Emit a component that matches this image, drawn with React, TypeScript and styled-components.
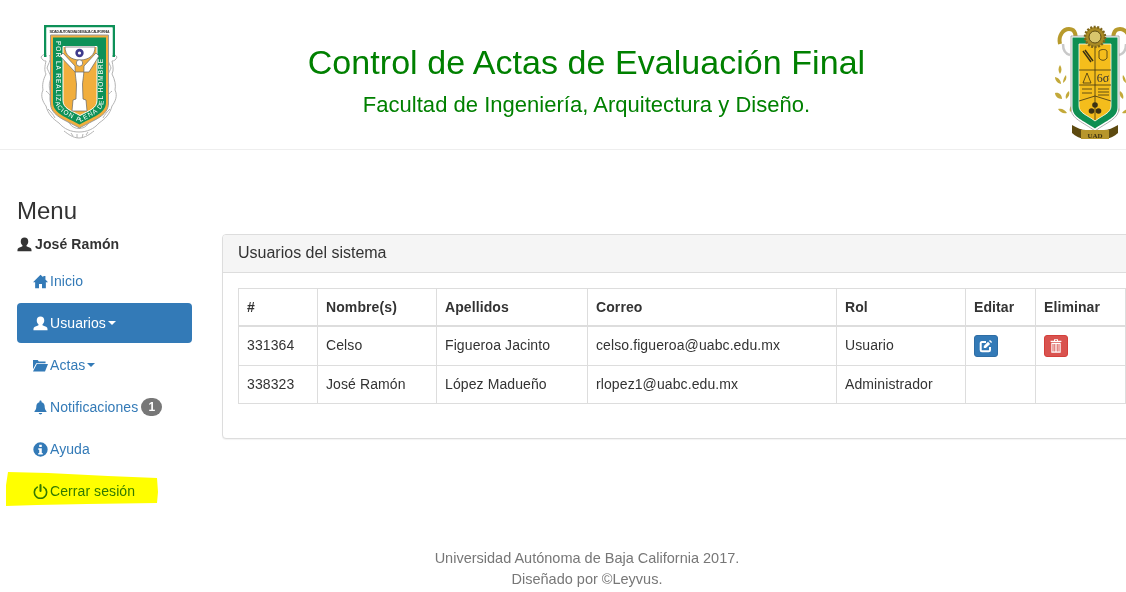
import React from 'react';
import styled, { createGlobalStyle } from 'styled-components';

const GlobalStyle = createGlobalStyle`
    html, body {
        margin: 0;
        height: 592px;
        overflow: hidden;
        background: #fff;
    }
    body {
        font-family: "Liberation Sans", Arial, sans-serif;
        font-size: 14px;
        line-height: 20px;
        color: #333;
    }
    * { box-sizing: border-box; }
`;

interface User {
    id: string;
    name: string;
    last: string;
    mail: string;
    role: string;
    actions?: boolean;
}

const users: User[] = [
    { id: '331364', name: 'Celso', last: 'Figueroa Jacinto', mail: 'celso.figueroa@uabc.edu.mx', role: 'Usuario', actions: true },
    { id: '338323', name: 'José Ramón', last: 'López Madueño', mail: 'rlopez1@uabc.edu.mx', role: 'Administrador' },
];

const columns = [
    { label: '#', width: 79 },
    { label: 'Nombre(s)', width: 119 },
    { label: 'Apellidos', width: 151 },
    { label: 'Correo', width: 249 },
    { label: 'Rol', width: 129 },
    { label: 'Editar', width: 70 },
    { label: 'Eliminar', width: 90 },
];

const UserIcon = () => (
    <Glyph viewBox="0 0 14 14">
        <path fill="currentColor" d="M7 0.4c2.200 0 3.500 1.500 3.500 3.700 0 1.500-.7 2.800-1.500 3.600-.3.4-.2 1 .3 1.200l2.900 1.200c1 .4 1.400 1 1.400 3.300H.4c0-2.300.4-2.900 1.400-3.300l2.900-1.200c.5-.2.6-.8.3-1.200C4.200 6.900 3.500 5.600 3.500 4.100 3.500 1.900 4.800.4 7 .4z" />
    </Glyph>
);

const HomeIcon = () => (
    <Glyph viewBox="0 0 14 14">
        <path fill="currentColor" d="M7 .6l2.600 2.500V1.800h2v3.300L14 7.600H12v5.800H8.400V9.400H5.600v4H2V7.600H0z" />
    </Glyph>
);

const FolderIcon = () => (
    <Glyph viewBox="0 0 14 14">
        <path fill="currentColor" d="M0 1.800h4.400l1 1.400h6.300v1.600H3L0 10.400zM3.600 5.600H14l-2.800 7H0z" />
    </Glyph>
);

const BellIcon = () => (
    <Glyph viewBox="0 0 14 14">
        <path fill="currentColor" d="M7 .4c.6 0 1 .4 1 1v.7c1.900.4 2.900 1.900 2.900 4 0 2.300.6 3.300 1.700 4.300v.8H1.400v-.8c1.100-1 1.700-2 1.700-4.300 0-2.100 1-3.600 2.900-4v-.7c0-.6.4-1 1-1zM5.400 12.200h3.200c0 .8-.7 1.300-1.600 1.300s-1.600-.5-1.600-1.300z" />
    </Glyph>
);

const InfoIcon = () => (
    <Glyph viewBox="0 0 14 14">
        <path fill="currentColor" fillRule="evenodd" d="M7 .3a6.700 6.700 0 1 1 0 13.400A6.700 6.700 0 0 1 7 .3zM5.800 2.500v2.100h2.400V2.500zM4.900 5.900v1.300h.9v3.100h-.9v1.300h4.200v-1.300h-.9V5.900z" />
    </Glyph>
);

const PowerIcon = () => (
    <Glyph viewBox="0 0 14 14">
        <path fill="none" stroke="currentColor" strokeWidth="1.500" strokeLinecap="round" d="M4 2.900a5.700 5.700 0 1 0 6 0" />
        <path fill="none" stroke="currentColor" strokeWidth="1.900" strokeLinecap="round" d="M7 1v5.600" />
    </Glyph>
);

const EditIcon = () => (
    <ButtonGlyph viewBox="0 0 14 14">
        <path fill="none" stroke="currentColor" strokeWidth="2" d="M11 8v3c0 .8-.5 1.200-1.300 1.200H2.900c-.8 0-1.200-.4-1.200-1.200V4.300c0-.8.4-1.300 1.200-1.300H7" />
        <path fill="currentColor" d="M4.800 7l4.200-4.200 2.100 2.100-4.200 4.200H4.800zM10 1.900l1-1 2.100 2.100-1 1z" />
    </ButtonGlyph>
);

const TrashIcon = () => (
    <ButtonGlyph viewBox="0 0 14 14">
        <path fill="currentColor" fillRule="evenodd" d="M5 .3h4v1.400h3.400v1.400H1.600V1.700H5zM6 1v.7h2V1zM2.300 3.800h9.400v9.900H2.300zM3.500 4.900v7.700h1V4.900zM5.300 4.900v7.700h1V4.900zM7.700 4.900v7.700h1V4.900zM9.500 4.900v7.700h1V4.900z" />
    </ButtonGlyph>
);

const UabcCrest = () => (
    <CrestSvg width="78" height="116" viewBox="0 0 78 116">
        <g fill="none" stroke="#b4b4b4" strokeWidth="1">
            <path fill="#fff" d="M1 32c3-4 7-4 9-1 1 5-2 8-3 12 2 5 5 8 3 13-2 6 1 10 0 15-1 8 3 13 9 18 5 3 9 5 11 10 4 6 14 6 18 0 2-5 6-7 11-10 6-5 10-10 9-18-1-5 2-9 0-15-2-5 1-8 3-13-1-4-4-7-3-12 2-3 6-3 9 1" />
            <path d="M1 32c1 3 3 4 5 4-1 5-2 9 0 13-3 6-4 11-3 16-3 6 0 12 3 16 2 8 7 13 13 17M77 32c-1 3-3 4-5 4 1 5 2 9 0 13 3 6 4 11 3 16 3 6 0 12-3 16-2 8-7 13-13 17" />
            <path d="M19 98c5 6 12 9 20 9s15-3 20-9M24 106c4 3 9 7 15 7s11-4 15-7M6 66c2 2 4 3 5 6M72 66c-2 2-4 3-5 6M8 84c3 3 5 5 7 9M70 84c-3 3-5 5-7 9" />
            <path d="M31 108l2 3M37 109v4M43 109l-1 4M48 107l-2 3" />
        </g>
        <path d="M4 0h71v32h-2.500V2.500h-66V32H4z" fill="#0d9158" />
        <path d="M6.500 2.500h66V30h-66z" fill="#fff" />
        <path d="M10.500 10h58v68c0 13-15 17-29 25-14-8-29-12-29-25z" fill="#f1ae3d" stroke="#999" strokeWidth="1" />
        <path d="M13 12.500h53v65c0 11-14 15-26.500 22C27 92.500 13 88.500 13 77.500z" fill="#0d9158" />
        <path d="M23 21.500h34v54c0 8-8 10-17 15-9-5-17-7-17-15z" fill="#f1ae3d" stroke="#fff" strokeWidth="1" />
        <path d="M25 22h30c0 8-6 13-15 13s-15-5-15-13z" fill="#fff" stroke="#666" strokeWidth=".7" />
        <circle cx="39.500" cy="28" r="4.200" fill="#3e3a8c" />
        <circle cx="39.500" cy="28" r="1.600" fill="#fff" />
        <path d="M23 28l12 13c0 8 1 13 1.500 18l-.5 15-3 1-1 11h15l-1-11-3-1-.5-15c.5-5 1.500-10 1.500-18l12-13 3 3-10 16h-14L20 31z" fill="#fff" stroke="#666" strokeWidth=".7" />
        <circle cx="39.500" cy="38" r="3.200" fill="#fff" stroke="#666" strokeWidth=".7" />
        <text x="39.500" y="8" textAnchor="middle" textLength="60" fontFamily='"Liberation Sans", sans-serif' fontSize="3.500" fontWeight="700" fill="#333">SIDAD AUTONOMA DE BAJA CALIFORNIA</text>
        <path id="uabcMotto" d="M15.500 16v61c0 9 12 14 24 20.500 12-6.500 24-11.500 24-20.500V16" fill="none" />
        <text fontFamily='"Liberation Sans", sans-serif' fontSize="6.500" fill="#fff" textLength="170">
            <textPath href="#uabcMotto" textLength="170">POR LA REALIZACION PLENA DEL HOMBRE</textPath>
        </text>
    </CrestSvg>
);

const FiadCrest = () => (
    <CrestSvg width="79" height="116" viewBox="0 0 79 116">
        <g fill="none" stroke="#c9c9c9" strokeWidth="2.500">
            <path d="M8 19c0 6 3 10 7 11M71 19c0 6-3 10-7 11" />
        </g>
        <g fill="none" stroke="#b79a2c" strokeWidth="4">
            <path d="M5 19c-2-8 3-15 9-15 7 0 8 8 5 15" />
            <path d="M74 19c2-8-3-15-9-15-7 0-8 8-5 15" />
        </g>
        <g fill="#c3a93a">
            <path d="M5 40c2 3 2 6 0 9-2-3-2-6 0-9zM0 52c4 1 6 4 6 7-4-1-6-4-6-7zM11 50c1 3 0 6-3 8 0-3 1-6 3-8zM0 68c4-1 7 2 7 6-4 0-7-3-7-6zM14 66c1 3 0 6-3 8-1-3 0-6 3-8zM3 84c4-1 7 1 9 4-4 1-7-1-9-4zM18 79c1 3 0 6-3 8-1-3 0-6 3-8z" />
            <path d="M74 40c2 3 2 6 0 9-2-3-2-6 0-9zM79 52c-4 1-6 4-6 7 4-1 6-4 6-7zM68 50c-1 3 0 6 3 8 0-3-1-6-3-8zM79 68c-4-1-7 2-7 6 4 0 7-3 7-6zM65 66c-1 3 0 6 3 8 1-3 0-6-3-8zM76 84c-4-1-7 1-9 4 4 1 7-1 9-4zM61 79c-1 3 0 6 3 8 1-3 0-6-3-8z" />
        </g>
        <path d="M16 11h48v72c0 11-12 14-24 23-12-9-24-12-24-23z" fill="#fff" stroke="#999" strokeWidth=".8" />
        <path d="M17.500 12.500h45v70c0 10-11 13-22.500 21-11.500-8-22.500-11-22.500-21z" fill="#0e8f52" />
        <path d="M24 19h32v62c0 7-8 9-16 15-8-6-16-8-16-15z" fill="#f4bd1c" stroke="#fff" strokeWidth=".8" />
        <g fill="none" stroke="#3c3213" strokeWidth=".8">
            <path d="M40 19v52M24 45h32M24 60h32M24 76l16-5 16 5M40 71v24" />
            <path d="M28 26l8 11M30 25l8 11" strokeWidth="1.500" />
            <path d="M44 26c2-2 7-2 8 0v7c-2 3-6 3-8 0zM32 48l-4 10h8zM43 64h11M43 67h11M43 70h11M27 64h10M27 68h10" />
        </g>
        <text x="48" y="57" textAnchor="middle" fontFamily='"Liberation Serif", serif' fontSize="12" fill="#333">6σ</text>
        <g fill="#3c3213">
            <circle cx="40" cy="80" r="2.800" />
            <circle cx="36.500" cy="86" r="2.800" />
            <circle cx="43.500" cy="86" r="2.800" />
        </g>
        <circle cx="40" cy="12" r="10" fill="#a98a24" stroke="#7d651a" strokeDasharray="2 1.500" strokeWidth="2.500" />
        <circle cx="40" cy="12" r="6" fill="#d8c56c" stroke="#5e4c14" strokeWidth="1" />
        <path d="M17 100c5 3 10 5 14 5l1 9c-6 0-12-3-15-6zM63 100c-5 3-10 5-14 5l-1 9c6 0 12-3 15-6z" fill="#5d4a10" />
        <path d="M26 105h28v9H26z" fill="#b7962c" />
        <text x="40" y="113" textAnchor="middle" fontFamily='"Liberation Serif", serif' fontSize="7" fontWeight="700" fill="#3c3213">UAD</text>
    </CrestSvg>
);

const App: React.FC = () => {
    return (
        <Page>
            <GlobalStyle />
            <Header>
                <UabcCrest />
                <HeaderText>
                    <Title>Control de Actas de Evaluación Final</Title>
                    <Subtitle>Facultad de Ingeniería, Arquitectura y Diseño.</Subtitle>
                </HeaderText>
                <FiadCrest />
            </Header>

            <Content>
                <Sidebar>
                    <MenuTitle>Menu</MenuTitle>
                    <CurrentUser>
                        <UserIcon />
                        José Ramón
                    </CurrentUser>
                    <Nav>
                        <NavLink>
                            <HomeIcon />
                            Inicio
                        </NavLink>
                        <NavLink $active>
                            <UserIcon />
                            Usuarios
                            <Caret />
                        </NavLink>
                        <NavLink>
                            <FolderIcon />
                            Actas
                            <Caret />
                        </NavLink>
                        <NavLink>
                            <BellIcon />
                            Notificaciones
                            <Badge>1</Badge>
                        </NavLink>
                        <NavLink>
                            <InfoIcon />
                            Ayuda
                        </NavLink>
                        <NavLink>
                            <PowerIcon />
                            Cerrar sesión
                            <Highlight width="154" height="36" viewBox="0 0 154 36" aria-hidden="true">
                                <path fill="#ffff00" d="M2 0l40 1 60 3 49 2 1 14-1 11-70 1-50 1-31 1-1-14z" />
                            </Highlight>
                        </NavLink>
                    </Nav>
                </Sidebar>

                <Panel>
                    <PanelHeading>Usuarios del sistema</PanelHeading>
                    <PanelBody>
                        <Table>
                            <colgroup>
                                {columns.map((c) => (
                                    <col key={c.label} style={{ width: c.width }} />
                                ))}
                            </colgroup>
                            <thead>
                                <tr>
                                    {columns.map((c) => (
                                        <Th key={c.label}>{c.label}</Th>
                                    ))}
                                </tr>
                            </thead>
                            <tbody>
                                {users.map((u) => (
                                    <tr key={u.id}>
                                        <Td>{u.id}</Td>
                                        <Td>{u.name}</Td>
                                        <Td>{u.last}</Td>
                                        <Td>{u.mail}</Td>
                                        <Td>{u.role}</Td>
                                        <Td>
                                            {u.actions && (
                                                <IconButton>
                                                    <EditIcon />
                                                </IconButton>
                                            )}
                                        </Td>
                                        <Td>
                                            {u.actions && (
                                                <IconButton $danger>
                                                    <TrashIcon />
                                                </IconButton>
                                            )}
                                        </Td>
                                    </tr>
                                ))}
                            </tbody>
                        </Table>
                    </PanelBody>
                </Panel>
            </Content>

            <Footer>
                <div>Universidad Autónoma de Baja California 2017.</div>
                <div>Diseñado por ©Leyvus.</div>
            </Footer>
        </Page>
    );
};

export default App;

const Page = styled.div`
    width: 1174px;
    height: 592px;
    overflow: hidden;
`;

const Header = styled.header`
    height: 150px;
    padding: 25px 40px 0;
    display: flex;
    align-items: flex-start;
    justify-content: space-between;
    border-bottom: 1px solid #eee;
`;

const CrestSvg = styled.svg`
    display: block;
    flex-shrink: 0;
`;

const HeaderText = styled.div`
    text-align: center;
    color: #008000;
`;

const Title = styled.h1`
    margin: 15px 0 0;
    font-size: 34px;
    line-height: 44px;
    font-weight: 400;
    letter-spacing: 0.05px;
`;

const Subtitle = styled.h4`
    margin: 8px 0 0;
    font-size: 22px;
    line-height: 26px;
    font-weight: 400;
    letter-spacing: 0.02px;
`;

const Content = styled.div`
    display: flex;
    align-items: flex-start;
    padding: 0 17px;
`;

const Sidebar = styled.aside`
    width: 175px;
    margin-right: 30px;
    flex-shrink: 0;
`;

const MenuTitle = styled.h3`
    margin: 47px 0 0;
    font-size: 24px;
    line-height: 28px;
    font-weight: 400;
`;

const CurrentUser = styled.div`
    display: flex;
    align-items: center;
    gap: 3px;
    margin-top: 9px;
    height: 20px;
    font-weight: 700;
    letter-spacing: 0.1px;
`;

const Glyph = styled.svg`
    width: 15px;
    height: 15px;
    flex-shrink: 0;
    margin-right: 2px;
    ${CurrentUser} & {
        margin-right: 0;
    }
`;

const Nav = styled.nav`
    display: flex;
    flex-direction: column;
    gap: 2px;
    margin-top: 7px;
`;

const NavLink = styled.a<{ $active?: boolean }>`
    position: relative;
    display: flex;
    align-items: center;
    height: 40px;
    padding: 0 15px 0 16px;
    border-radius: 4px;
    letter-spacing: 0.08px;
    color: ${(props) => (props.$active ? '#fff' : '#337ab7')};
    background: ${(props) => (props.$active ? '#337ab7' : 'transparent')};
`;

const Caret = styled.span`
    width: 0;
    height: 0;
    margin-left: 2px;
    border-top: 4px solid currentColor;
    border-left: 4px solid transparent;
    border-right: 4px solid transparent;
`;

const Badge = styled.span`
    display: inline-block;
    min-width: 21px;
    margin-left: 3px;
    padding: 3px 7px;
    border-radius: 10px;
    background: #777;
    color: #fff;
    font-size: 12px;
    font-weight: 700;
    line-height: 12px;
    text-align: center;
`;

const Highlight = styled.svg`
    position: absolute;
    left: -11px;
    top: 1px;
    mix-blend-mode: multiply;
    pointer-events: none;
`;

const Panel = styled.section`
    width: 920px;
    margin-top: 84px;
    border: 1px solid #ddd;
    border-radius: 4px;
    background: #fff;
    box-shadow: 0 1px 1px rgba(0, 0, 0, 0.05);
    flex-shrink: 0;
`;

const PanelHeading = styled.div`
    height: 38px;
    padding: 9px 15px;
    border-bottom: 1px solid #ddd;
    border-radius: 3px 3px 0 0;
    background: #f5f5f5;
    font-size: 16px;
    line-height: 18px;
`;

const PanelBody = styled.div`
    padding: 15px 15px 34px;
`;

const Table = styled.table`
    width: 887px;
    table-layout: fixed;
    border-collapse: collapse;
    border-spacing: 0;
`;

const Th = styled.th`
    padding: 8px;
    border: 1px solid #ddd;
    border-bottom: 2px solid #ddd;
    text-align: left;
    font-weight: 700;
    line-height: 20px;
    letter-spacing: 0.1px;
`;

const Td = styled.td`
    height: 38px;
    padding: 8px;
    border: 1px solid #ddd;
    line-height: 20px;
    letter-spacing: 0.1px;
    vertical-align: top;
`;

const IconButton = styled.button<{ $danger?: boolean }>`
    display: flex;
    align-items: center;
    justify-content: center;
    width: 24px;
    height: 22px;
    padding: 0;
    border: 1px solid ${(props) => (props.$danger ? '#d43f3a' : '#2e6da4')};
    border-radius: 3px;
    color: #fff;
    background: ${(props) => (props.$danger ? '#d9534f' : '#337ab7')};
`;

const ButtonGlyph = styled.svg`
    width: 14px;
    height: 14px;
`;

const Footer = styled.footer`
    margin-top: 37px;
    text-align: center;
    color: #777;
    font-size: 14.5px;
    line-height: 21px;
`;
